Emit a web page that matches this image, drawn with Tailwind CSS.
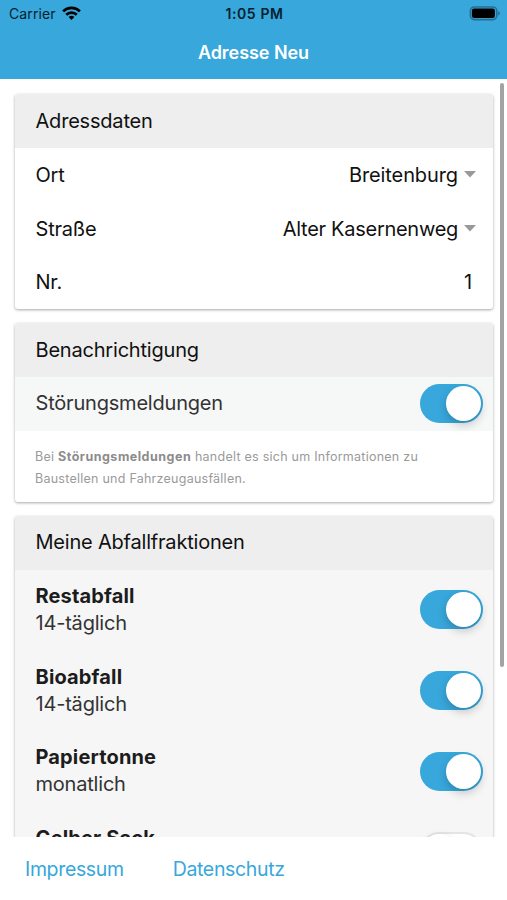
<!DOCTYPE html>
<html lang="de">

<head>
    <meta charset="UTF-8">
    <meta name="viewport" content="width=device-width, initial-scale=1.0">
    <title>Adresse Neu</title>
    <script src="https://cdn.jsdelivr.net/npm/@tailwindcss/browser@4"></script>
</head>

<body class="relative flex h-[900px] w-[507px] flex-col overflow-hidden bg-white font-[Inter,'Liberation_Sans',sans-serif] text-[20px] leading-[27px] tracking-[-0.2px] text-[#111]">
    <header class="h-[79px] shrink-0 bg-[#38a7db]">
        <!-- Statusleiste -->
        <div class="grid h-7 grid-cols-3 items-center pl-[9px] pr-[7px] text-[14px] leading-none tracking-[0.1px] text-[#06212e]">
            <div class="flex items-center gap-[6px]">
                <span>Carrier</span>
                <svg class="h-[14px] w-[19px] -translate-y-px" viewBox="0 0 19 14" fill="none" stroke="#000" stroke-width="2.7">
                    <path d="M1.1 5.4a12 12 0 0 1 16.8 0" />
                    <path d="M4.2 8.7a7.6 7.6 0 0 1 10.6 0" />
                    <path d="M9.5 14 6.6 11.1a4.1 4.1 0 0 1 5.8 0z" fill="#000" stroke="none" />
                </svg>
            </div>
            <div class="text-center font-semibold tracking-[0.6px]">1:05 PM</div>
            <svg class="h-[15px] w-[31px] -translate-y-px justify-self-end" viewBox="0 0 31 15">
                <rect x="1.4" y="1" width="26.4" height="12.6" rx="4" fill="#38a7db" stroke="#256f92" stroke-width="1.6" />
                <rect x="2.9" y="2.6" width="23" height="9.4" rx="2.2" fill="#000" />
                <path d="M29.2 5.2c2.2.6 2.2 3.6 0 4.2z" fill="#256f92" />
            </svg>
        </div>
        <h1 class="text-center text-[18px] font-semibold leading-[50px] tracking-[-0.05px] text-white">Adresse Neu</h1>
    </header>

    <main class="flex min-h-0 flex-1 flex-col gap-[14px] overflow-hidden px-[15px] pt-[15px]">
        <section class="w-[478px] shrink-0 overflow-hidden rounded-[3px] bg-white shadow-[0_1px_3px_rgba(0,0,0,0.35)]">
            <h2 class="flex h-[53.5px] items-center bg-[#eeeeee] px-[20.5px] pt-[0.5px]">Adressdaten</h2>
            <div class="flex h-[54px] items-center pl-[20.5px] pr-[17px] pt-px">
                <span class="flex-1">Ort</span>
                <span class="tracking-[-0.1px]">Breitenburg</span>
                <svg class="ml-[6px] h-[7px] w-3 -translate-y-px" viewBox="0 0 12 7"><path d="M0 0h12L6 6.5z" fill="#999" /></svg>
            </div>
            <div class="flex h-[54px] items-center pl-[20.5px] pr-[17px] pt-px">
                <span class="flex-1">Straße</span>
                <span class="tracking-[-0.28px]">Alter Kasernenweg</span>
                <svg class="ml-[6px] h-[7px] w-3 -translate-y-px" viewBox="0 0 12 7"><path d="M0 0h12L6 6.5z" fill="#999" /></svg>
            </div>
            <div class="flex h-[53.5px] items-center justify-between pl-[20.5px] pr-[21px]">
                <span>Nr.</span>
                <span>1</span>
            </div>
        </section>

        <section class="w-[478px] shrink-0 overflow-hidden rounded-[3px] bg-white shadow-[0_1px_3px_rgba(0,0,0,0.35)]">
            <h2 class="flex h-[53.5px] items-center bg-[#eeeeee] px-[20.5px] pt-[0.5px]">Benachrichtigung</h2>
            <div class="flex h-[54px] items-center justify-between bg-[#f6f7f7] pl-[20.5px] pr-[10.5px] text-[#333]">
                <span>Störungsmeldungen</span>
                <span class="flex h-[39px] w-[62.5px] items-center justify-end rounded-full bg-[#38a7db] pr-[2px]">
                    <span class="size-[35px] rounded-full bg-white shadow-[0_4px_10px_rgba(0,0,0,0.2)]"></span>
                </span>
            </div>
            <p class="h-[71px] pl-[20px] pt-[15.5px] text-[12.5px] leading-[22px] tracking-[0.25px] text-[#9a9a9a]">
                Bei <b class="font-bold tracking-[0.5px] text-[#8c8c8c]">Störungsmeldungen</b> handelt es sich um Informationen zu<br>Baustellen und Fahrzeugausfällen.
            </p>
        </section>

        <section class="w-[478px] shrink-0 overflow-hidden rounded-[3px] bg-[#f6f6f6] shadow-[0_1px_3px_rgba(0,0,0,0.35)]">
            <h2 class="flex h-[54px] items-center bg-[#eeeeee] px-[20.5px]">Meine Abfallfraktionen</h2>
            <div class="flex h-[80.7px] items-center justify-between pl-[20.5px] pr-[10.5px]">
                <div class="pt-px">
                    <div class="font-bold tracking-[0.15px] text-[#1c1c1c]">Restabfall</div>
                    <div class="text-[#333]">14-täglich</div>
                </div>
                <span class="flex h-[39px] w-[62.5px] items-center justify-end rounded-full bg-[#38a7db] pr-[2px]">
                    <span class="size-[35px] rounded-full bg-white shadow-[0_4px_10px_rgba(0,0,0,0.2)]"></span>
                </span>
            </div>
            <div class="flex h-[80.7px] items-center justify-between pl-[20.5px] pr-[10.5px]">
                <div class="pt-px">
                    <div class="font-bold tracking-[0.15px] text-[#1c1c1c]">Bioabfall</div>
                    <div class="text-[#333]">14-täglich</div>
                </div>
                <span class="flex h-[39px] w-[62.5px] items-center justify-end rounded-full bg-[#38a7db] pr-[2px]">
                    <span class="size-[35px] rounded-full bg-white shadow-[0_4px_10px_rgba(0,0,0,0.2)]"></span>
                </span>
            </div>
            <div class="flex h-[80.7px] items-center justify-between pl-[20.5px] pr-[10.5px]">
                <div>
                    <div class="font-bold tracking-[0.15px] text-[#1c1c1c]">Papiertonne</div>
                    <div class="text-[#333]">monatlich</div>
                </div>
                <span class="flex h-[39px] w-[62.5px] items-center justify-end rounded-full bg-[#38a7db] pr-[2px]">
                    <span class="size-[35px] rounded-full bg-white shadow-[0_4px_10px_rgba(0,0,0,0.2)]"></span>
                </span>
            </div>
            <div class="flex h-[80.7px] items-center justify-between pl-[20.5px] pr-[10.5px]">
                <div class="pt-px">
                    <div class="font-bold tracking-[0.15px] text-[#1c1c1c]">Gelber Sack</div>
                    <div class="text-[#333]">&nbsp;</div>
                </div>
                <span class="flex h-[39px] w-[62.5px] items-center rounded-full border-2 border-[#e4e4e4] bg-white">
                    <span class="size-[35px] rounded-full bg-white shadow-[0_4px_10px_rgba(0,0,0,0.2)]"></span>
                </span>
            </div>
        </section>
    </main>

    <footer class="flex h-[63px] shrink-0 gap-[49px] bg-white pl-[25px] pt-[19px] text-[19.5px] tracking-[-0.35px] text-[#38a7db]">
        <a href="#">Impressum</a>
        <a href="#">Datenschutz</a>
    </footer>

    <!-- Scrollbalken -->
    <div class="absolute right-[3px] top-[83px] h-[584px] w-[4px] rounded-full bg-[#a3a3a3]"></div>
</body>

</html>
